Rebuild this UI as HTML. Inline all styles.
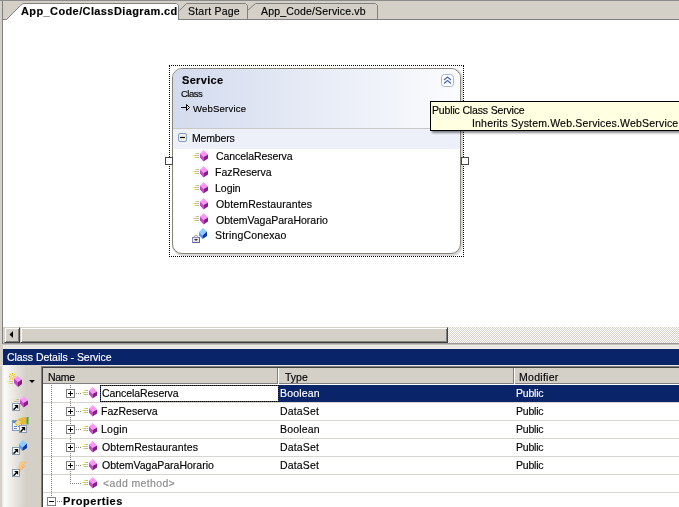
<!DOCTYPE html>
<html><head><meta charset="utf-8">
<style>
*{margin:0;padding:0;box-sizing:border-box}
html,body{width:679px;height:507px;overflow:hidden;background:#d4d0c8;font-family:"Liberation Sans",sans-serif;font-size:11px;color:#000}
.a{position:absolute}
.t{position:absolute;white-space:nowrap;line-height:13px;will-change:transform;-webkit-text-stroke:0.15px currentColor}
</style></head><body>
<svg width="0" height="0" style="position:absolute">
<defs>
<symbol id="meth" viewBox="0 0 16 16">
  <rect x="3" y="5" width="4" height="1" fill="#b8b8b0"/>
  <rect x="1" y="7" width="6" height="1" fill="#b8b8b0"/>
  <rect x="2" y="9" width="5" height="1" fill="#b8b8b0"/>
  <rect x="3" y="5" width="1.5" height="1" fill="#f0f040"/>
  <rect x="1" y="7" width="1.5" height="1" fill="#f0f040"/>
  <rect x="2" y="9" width="1.5" height="1" fill="#f0f040"/>
  <rect x="4.5" y="7" width="1.5" height="1" fill="#d8c8a0"/>
  <use href="#cube"/>
</symbol>
<symbol id="cube" viewBox="0 0 16 16">
  <path d="M8 5.5 L11.5 2 L16 6.5 L11.5 9 Z" fill="#fa96fa"/>
  <path d="M8 5.5 L11.5 9 L11.5 13.5 L8 9.5 Z" fill="#c448c4"/>
  <path d="M11.5 9 L16 6.5 L16 10.5 L11.5 13.5 Z" fill="#8a1c8a"/>
  <path d="M9.5 5 L11.5 3" stroke="#fff" stroke-opacity=".45"/>
</symbol>
<symbol id="fld" viewBox="0 0 16 16">
  <path d="M7 5 L11 1 L15 4.5 L10.5 8.5 Z" fill="#90ccff"/>
  <path d="M7 5 L10.5 8.5 L10.5 12 L7 8.5 Z" fill="#5aa0f0"/>
  <path d="M10.5 8.5 L15 4.5 L15 9 L10.5 12 Z" fill="#0a3cb0"/>
</symbol>
<symbol id="plus" viewBox="0 0 9 9">
  <rect x="0.5" y="0.5" width="8" height="8" fill="#fff" stroke="#808080"/>
  <path d="M2 4.5 H7 M4.5 2 V7" stroke="#000"/>
</symbol>
<symbol id="minus" viewBox="0 0 9 9">
  <rect x="0.5" y="0.5" width="8" height="8" fill="#fff" stroke="#808080"/>
  <path d="M2 4.5 H7" stroke="#000"/>
</symbol>
<symbol id="sc" viewBox="0 0 8 8">
  <rect x="0.5" y="0.5" width="7" height="7" fill="#fafafa" stroke="#8a98b0"/>
  <path d="M2 6.2 L4.2 4" fill="none" stroke="#000" stroke-width="1.5" stroke-linecap="round"/>
  <path d="M2.2 2 H6.2 V6 Z" fill="#000"/>
</symbol>
</defs></svg>
<div class="a" style="left:0px;top:0px;width:679px;height:1px;background:#8c8c8c;"></div>
<div class="a" style="left:2px;top:1px;width:1px;height:343px;background:#808080;"></div>
<div class="a" style="left:3px;top:19px;width:676px;height:1px;background:#808080;"></div>
<svg class="a" style="left:0;top:0" width="679" height="20">
  <path d="M247 19 V10.5 L255.5 3 H377.5 V19 Z" fill="#d4d0c8"/><path d="M247.5 10.5 L255.5 3.5 H375.5 L377.5 5.5 V19.5" fill="none" stroke="#808080"/>
  <path d="M179 19 V10.5 L186.5 3 H247.5 V19 Z" fill="#d4d0c8"/><path d="M179.5 10.5 L186.5 3.5 H245.5 L247.5 5.5 V19.5" fill="none" stroke="#808080"/>
  <path d="M3 20 V19.5 H6.5 L20.5 5.5 L22.5 4 L24 3.5 H176.5 L178.5 5.5 V20" fill="#fff" stroke="#808080"/>
</svg>
<div class="a" style="left:3px;top:20px;width:676px;height:307px;background:#fff;"></div>
<div class="a" style="left:3px;top:327px;width:676px;height:16px;background:#fff;background-image:linear-gradient(45deg,#d4d0c8 25%,transparent 25%,transparent 75%,#d4d0c8 75%),linear-gradient(45deg,#d4d0c8 25%,transparent 25%,transparent 75%,#d4d0c8 75%);background-size:2px 2px;background-position:0 0,1px 1px"></div>
<div class="a" style="left:3px;top:327px;width:1px;height:16px;background:#d4d0c8;"></div>
<div class="a" style="left:4px;top:327px;width:16px;height:16px;background:#d4d0c8;border-top:1px solid #d4d0c8;border-left:1px solid #d4d0c8;border-right:1px solid #404040;border-bottom:1px solid #404040;box-shadow:inset 1px 1px #fff,inset -1px -1px #808080"></div>
<svg class="a" style="left:9px;top:331px" width="6" height="8"><path d="M4 0 V7 L0.5 3.5 Z" fill="#000"/></svg>
<div class="a" style="left:20px;top:327px;width:428px;height:16px;background:#d4d0c8;border-top:1px solid #d4d0c8;border-left:1px solid #d4d0c8;border-right:1px solid #404040;border-bottom:1px solid #404040;box-shadow:inset 1px 1px #fff,inset -1px -1px #808080"></div>
<div class="a" style="left:3px;top:343px;width:676px;height:1px;background:#9c9a96;"></div>
<div class="a" style="left:0px;top:344px;width:679px;height:5px;background:#d4d0c8;"></div>
<div class="a" style="left:3px;top:344px;width:676px;height:1px;background:#c4c2bc;"></div>
<div class="a" style="left:3px;top:345px;width:676px;height:4px;background:#ebe9e4;"></div>
<div class="a" style="left:169px;top:65px;width:295px;height:192px;border:1px dotted #000"></div>
<div class="a" style="left:172px;top:68px;width:291px;height:188px;border-radius:11px;background:#d8d8d8"></div>
<div class="a" style="left:172px;top:68px;width:289px;height:186px;border:1px solid #868478;border-radius:10px;overflow:hidden;background:#fff">
  <div class="a" style="left:0;top:0;width:287px;height:60px;background:linear-gradient(90deg,#d3dbee,#fbfcfe)"></div>
  <div class="a" style="left:0;top:59px;width:287px;height:1px;background:#c8c8c8"></div>
  <div class="a" style="left:0;top:60px;width:287px;height:20px;background:#edf0f8"></div>
</div>
<svg class="a" style="left:181px;top:104px" width="10" height="8"><path d="M0 3.5 H5" stroke="#000"/><path d="M5.5 0.5 L8.5 3.5 L5.5 6.5 Z" fill="none" stroke="#000"/></svg>
<svg class="a" style="left:441px;top:74px" width="13" height="13">
  <rect x="0.5" y="0.5" width="12" height="12" rx="3" fill="#fff" stroke="#9cb4d8"/>
  <path d="M3 6 L6.5 3 L10 6 M3 9.5 L6.5 6.5 L10 9.5" fill="none" stroke="#4a68b0" stroke-width="1.3"/>
</svg>
<svg class="a" style="left:178px;top:133px" width="9" height="9">
  <rect x="0.5" y="0.5" width="8" height="8" rx="1.5" fill="#f4efe4" stroke="#7d9cc8"/>
  <path d="M2 4.5 H7" stroke="#000" stroke-width="1.2"/>
</svg>
<svg class="a" style="left:192px;top:148px" width="16" height="16"><use href="#meth"/></svg>
<svg class="a" style="left:192px;top:164px" width="16" height="16"><use href="#meth"/></svg>
<svg class="a" style="left:192px;top:180px" width="16" height="16"><use href="#meth"/></svg>
<svg class="a" style="left:192px;top:196px" width="16" height="16"><use href="#meth"/></svg>
<svg class="a" style="left:192px;top:211px" width="16" height="16"><use href="#meth"/></svg>
<svg class="a" style="left:192px;top:227px" width="16" height="16"><use href="#fld"/></svg>
<svg class="a" style="left:192px;top:234px" width="9" height="9">
  <path d="M2 4 V2.5 Q4 0 6 2.5 V4" fill="#fff" stroke="#9a9ac0"/>
  <rect x="0.5" y="3.5" width="7" height="5" fill="#e6e6e6" stroke="#8888b8"/>
  <path d="M0.5 8.5 H7.5 V3.5" fill="none" stroke="#6060a0"/>
  <path d="M2 5 H6 L4 7 Z" fill="#303030"/>
</svg>
<div class="a" style="left:165px;top:157px;width:8px;height:8px;background:#fff;border:1px solid #484848"></div>
<div class="a" style="left:461px;top:157px;width:8px;height:8px;background:#fff;border:1px solid #484848"></div>
<div class="a" style="left:430px;top:101px;width:260px;height:30px;background:transparent;box-shadow:2px 2px 2px rgba(0,0,0,.45)"></div>
<div class="a" style="left:430px;top:101px;width:260px;height:30px;background:#ffffe1;border:1px solid #000"></div>
<div class="a" style="left:3px;top:349px;width:676px;height:16px;background:#0a246a;"></div>
<div class="a" style="left:0px;top:365px;width:679px;height:1px;background:#e8e6e0;"></div>
<div class="a" style="left:2px;top:365px;width:39px;height:142px;background:linear-gradient(90deg,#e4e1da 0px,#fbfbfa 2px,#d4d0c8 24px,#d4d0c8 39px);"></div>
<div class="a" style="left:41px;top:366px;width:638px;height:141px;background:#fff;border-left:1px solid #808080;border-top:1px solid #808080"></div>
<div class="a" style="left:42px;top:367px;width:637px;height:140px;background:transparent;border-left:1px solid #404040;border-top:1px solid #404040"></div>
<div class="a" style="left:43px;top:368px;width:636px;height:15px;background:#d4d0c8;"></div>
<div class="a" style="left:43px;top:383px;width:636px;height:1px;background:#808080;"></div>
<div class="a" style="left:43px;top:384px;width:636px;height:1px;background:#fff;"></div>
<div class="a" style="left:277px;top:368px;width:1px;height:15px;background:#808080;"></div>
<div class="a" style="left:278px;top:368px;width:1px;height:16px;background:#fff;"></div>
<div class="a" style="left:513px;top:368px;width:1px;height:15px;background:#808080;"></div>
<div class="a" style="left:514px;top:368px;width:1px;height:16px;background:#fff;"></div>
<div class="a" style="left:279px;top:385px;width:400px;height:17px;background:#0a246a;"></div>
<div class="a" style="left:100px;top:385px;width:179px;height:17px;background:transparent;border:1px solid #2a4a9a"></div>
<div class="a" style="left:100px;top:385px;width:179px;height:17px;background:transparent;border:1px dotted #000"></div>
<div class="a" style="left:43px;top:402px;width:636px;height:1px;background:#d8d5ce;"></div>
<div class="a" style="left:43px;top:420px;width:636px;height:1px;background:#d8d5ce;"></div>
<div class="a" style="left:43px;top:438px;width:636px;height:1px;background:#d8d5ce;"></div>
<div class="a" style="left:43px;top:456px;width:636px;height:1px;background:#d8d5ce;"></div>
<div class="a" style="left:43px;top:474px;width:636px;height:1px;background:#d8d5ce;"></div>
<div class="a" style="left:43px;top:492px;width:636px;height:1px;background:#d8d5ce;"></div>
<div class="a" style="left:51px;top:385px;width:1px;height:111px;background:transparent;border-left:1px dotted #808080"></div>
<div class="a" style="left:70px;top:385px;width:1px;height:99px;background:transparent;border-left:1px dotted #808080"></div>
<svg class="a" style="left:66px;top:389px" width="9" height="9"><use href="#plus"/></svg>
<div class="a" style="left:76px;top:393px;width:1px;height:1px;background:#808080;"></div>
<div class="a" style="left:78px;top:393px;width:1px;height:1px;background:#808080;"></div>
<div class="a" style="left:80px;top:393px;width:1px;height:1px;background:#808080;"></div>
<svg class="a" style="left:81px;top:385px" width="16" height="16"><use href="#meth"/></svg>
<svg class="a" style="left:66px;top:407px" width="9" height="9"><use href="#plus"/></svg>
<div class="a" style="left:76px;top:411px;width:1px;height:1px;background:#808080;"></div>
<div class="a" style="left:78px;top:411px;width:1px;height:1px;background:#808080;"></div>
<div class="a" style="left:80px;top:411px;width:1px;height:1px;background:#808080;"></div>
<svg class="a" style="left:81px;top:403px" width="16" height="16"><use href="#meth"/></svg>
<svg class="a" style="left:66px;top:425px" width="9" height="9"><use href="#plus"/></svg>
<div class="a" style="left:76px;top:429px;width:1px;height:1px;background:#808080;"></div>
<div class="a" style="left:78px;top:429px;width:1px;height:1px;background:#808080;"></div>
<div class="a" style="left:80px;top:429px;width:1px;height:1px;background:#808080;"></div>
<svg class="a" style="left:81px;top:421px" width="16" height="16"><use href="#meth"/></svg>
<svg class="a" style="left:66px;top:443px" width="9" height="9"><use href="#plus"/></svg>
<div class="a" style="left:76px;top:447px;width:1px;height:1px;background:#808080;"></div>
<div class="a" style="left:78px;top:447px;width:1px;height:1px;background:#808080;"></div>
<div class="a" style="left:80px;top:447px;width:1px;height:1px;background:#808080;"></div>
<svg class="a" style="left:81px;top:439px" width="16" height="16"><use href="#meth"/></svg>
<svg class="a" style="left:66px;top:461px" width="9" height="9"><use href="#plus"/></svg>
<div class="a" style="left:76px;top:465px;width:1px;height:1px;background:#808080;"></div>
<div class="a" style="left:78px;top:465px;width:1px;height:1px;background:#808080;"></div>
<div class="a" style="left:80px;top:465px;width:1px;height:1px;background:#808080;"></div>
<svg class="a" style="left:81px;top:457px" width="16" height="16"><use href="#meth"/></svg>
<div class="a" style="left:72px;top:483px;width:1px;height:1px;background:#808080;"></div>
<div class="a" style="left:74px;top:483px;width:1px;height:1px;background:#808080;"></div>
<div class="a" style="left:76px;top:483px;width:1px;height:1px;background:#808080;"></div>
<div class="a" style="left:78px;top:483px;width:1px;height:1px;background:#808080;"></div>
<div class="a" style="left:80px;top:483px;width:1px;height:1px;background:#808080;"></div>
<svg class="a" style="left:81px;top:475px" width="16" height="16"><use href="#meth"/></svg>
<svg class="a" style="left:47px;top:497px" width="9" height="9"><use href="#minus"/></svg>
<div class="a" style="left:57px;top:501px;width:1px;height:1px;background:#808080;"></div>
<div class="a" style="left:59px;top:501px;width:1px;height:1px;background:#808080;"></div>
<div class="a" style="left:61px;top:501px;width:1px;height:1px;background:#808080;"></div>
<svg class="a" style="left:6px;top:372px" width="18" height="16">
  <rect x="3" y="1" width="7" height="7" fill="#faeb8c"/>
  <path d="M6.5 1 V8 M3 4.5 H10" stroke="#e0a818" stroke-dasharray="1.2 1"/>
  <path d="M4 2 L9 7 M9 2 L4 7" stroke="#e8b820" stroke-width=".8" stroke-dasharray="1 1"/>
  <circle cx="6.5" cy="4.5" r="1" fill="#fffbe8"/>
  <rect x="1" y="9" width="6" height="1" fill="#c8c8a8"/><rect x="1" y="9" width="2" height="1" fill="#f0f070"/>
  <rect x="2" y="11" width="5" height="1" fill="#c0c4b8"/><rect x="2" y="11" width="2" height="1" fill="#f0f070"/>
  <path d="M8 6.5 L11.5 4 L16 7.5 L12 10 Z" fill="#fa96fa"/>
  <path d="M8 6.5 L12 10 L12 15 L8 11 Z" fill="#c448c4"/>
  <path d="M12 10 L16 7.5 L16 12 L12 15 Z" fill="#8a1c8a"/>
</svg>
<svg class="a" style="left:29px;top:380px" width="6" height="3"><path d="M0 0 H6 L3 3 Z" fill="#000"/></svg>
<svg class="a" style="left:12px;top:394px" width="16" height="16"><use href="#meth"/></svg>
<svg class="a" style="left:12px;top:403px" width="8" height="8"><use href="#sc"/></svg>
<svg class="a" style="left:12px;top:416px" width="17" height="17">
  <rect x="0.5" y="4.5" width="9" height="10" fill="#f0f4fa" stroke="#8898b8"/>
  <rect x="1" y="5" width="8" height="2" fill="#5a8ad0"/>
  <path d="M2 10.5 H5 M6 10.5 H8 M2 12.5 H5" stroke="#6a8ac0"/>
  <path d="M2.5 7.5 L7 2.5 L13 1 L15 2 L15 7 L12 8.5 L8 8 L5 10 Z" fill="#e8b838"/>
  <path d="M3 7 L6 4 L9 6 L6 9 Z" fill="#f8e8a0" opacity=".8"/>
  <rect x="14.5" y="1" width="2" height="7.5" fill="#40a848"/>
</svg>
<svg class="a" style="left:19px;top:425px" width="8" height="8"><use href="#sc"/></svg>
<svg class="a" style="left:12px;top:439px" width="16" height="16"><use href="#fld"/></svg>
<svg class="a" style="left:12px;top:447px" width="8" height="8"><use href="#sc"/></svg>
<svg class="a" style="left:12px;top:460px" width="16" height="16">
  <defs><linearGradient id="lg" x1="0" y1="0" x2="1" y2="1"><stop offset="0" stop-color="#ffe888"/><stop offset="1" stop-color="#f09070"/></linearGradient></defs>
  <path d="M9 2 L14.5 2 L10.5 6 L13.5 6 L6 13 L8.5 8 L6.5 8 Z" fill="url(#lg)" stroke="#f0b060" stroke-width="0.5"/>
</svg>
<svg class="a" style="left:12px;top:469px" width="8" height="8"><use href="#sc"/></svg>
<div class="t" style="left:21px;top:5px;font-size:11px;letter-spacing:0.391px;font-weight:bold">App_Code/ClassDiagram.cd</div>
<div class="t" style="left:188px;top:5px;font-size:10.5px;letter-spacing:0.222px">Start Page</div>
<div class="t" style="left:261px;top:5px;font-size:10.5px;letter-spacing:0.167px">App_Code/Service.vb</div>
<div class="t" style="left:182px;top:74px;font-size:11px;letter-spacing:0.333px;font-weight:bold">Service</div>
<div class="t" style="left:181px;top:87px;font-size:9.5px;letter-spacing:-0.500px">Class</div>
<div class="t" style="left:193px;top:102px;font-size:9.5px;letter-spacing:0.222px">WebService</div>
<div class="t" style="left:192px;top:132px;font-size:10.5px;letter-spacing:-0.167px">Members</div>
<div class="t" style="left:216px;top:150px;font-size:10.5px;letter-spacing:-0.077px">CancelaReserva</div>
<div class="t" style="left:215px;top:166px;font-size:10.5px;letter-spacing:0.000px">FazReserva</div>
<div class="t" style="left:215px;top:182px;font-size:10.5px;letter-spacing:0.000px">Login</div>
<div class="t" style="left:216px;top:198px;font-size:10.5px;letter-spacing:0.125px">ObtemRestaurantes</div>
<div class="t" style="left:216px;top:214px;font-size:10.5px;letter-spacing:0.000px">ObtemVagaParaHorario</div>
<div class="t" style="left:215px;top:229px;font-size:10.5px;letter-spacing:0.167px">StringConexao</div>
<div class="t" style="left:432px;top:104px;font-size:10.5px;letter-spacing:-0.158px">Public Class Service</div>
<div class="t" style="left:472px;top:117px;font-size:10.5px;letter-spacing:0.184px">Inherits System.Web.Services.WebService</div>
<div class="t" style="left:7px;top:351px;font-size:10.5px;letter-spacing:-0.045px;color:#fff">Class Details - Service</div>
<div class="t" style="left:48px;top:371px;font-size:10.5px;letter-spacing:-0.333px">Name</div>
<div class="t" style="left:285px;top:371px;font-size:10.5px;letter-spacing:0.000px">Type</div>
<div class="t" style="left:519px;top:371px;font-size:10.5px;letter-spacing:0.286px">Modifier</div>
<div class="t" style="left:102px;top:387px;font-size:10.5px;letter-spacing:-0.077px">CancelaReserva</div>
<div class="t" style="left:101px;top:405px;font-size:10.5px;letter-spacing:0.000px">FazReserva</div>
<div class="t" style="left:101px;top:423px;font-size:10.5px;letter-spacing:0.250px">Login</div>
<div class="t" style="left:102px;top:441px;font-size:10.5px;letter-spacing:0.125px">ObtemRestaurantes</div>
<div class="t" style="left:102px;top:459px;font-size:10.5px;letter-spacing:0.000px">ObtemVagaParaHorario</div>
<div class="t" style="left:103px;top:477px;font-size:10.5px;letter-spacing:0.364px;color:#8a8a8a">&lt;add method&gt;</div>
<div class="t" style="left:280px;top:387px;font-size:10.5px;letter-spacing:0.167px;color:#fff">Boolean</div>
<div class="t" style="left:516px;top:387px;font-size:10.5px;letter-spacing:-0.200px;color:#fff">Public</div>
<div class="t" style="left:280px;top:405px;font-size:10.5px;letter-spacing:0.167px">DataSet</div>
<div class="t" style="left:516px;top:405px;font-size:10.5px;letter-spacing:-0.200px">Public</div>
<div class="t" style="left:280px;top:423px;font-size:10.5px;letter-spacing:0.167px">Boolean</div>
<div class="t" style="left:516px;top:423px;font-size:10.5px;letter-spacing:-0.200px">Public</div>
<div class="t" style="left:280px;top:441px;font-size:10.5px;letter-spacing:0.167px">DataSet</div>
<div class="t" style="left:516px;top:441px;font-size:10.5px;letter-spacing:-0.200px">Public</div>
<div class="t" style="left:280px;top:459px;font-size:10.5px;letter-spacing:0.167px">DataSet</div>
<div class="t" style="left:516px;top:459px;font-size:10.5px;letter-spacing:-0.200px">Public</div>
<div class="t" style="left:63px;top:495px;font-size:11px;letter-spacing:0.556px;font-weight:bold">Properties</div>

</body></html>
